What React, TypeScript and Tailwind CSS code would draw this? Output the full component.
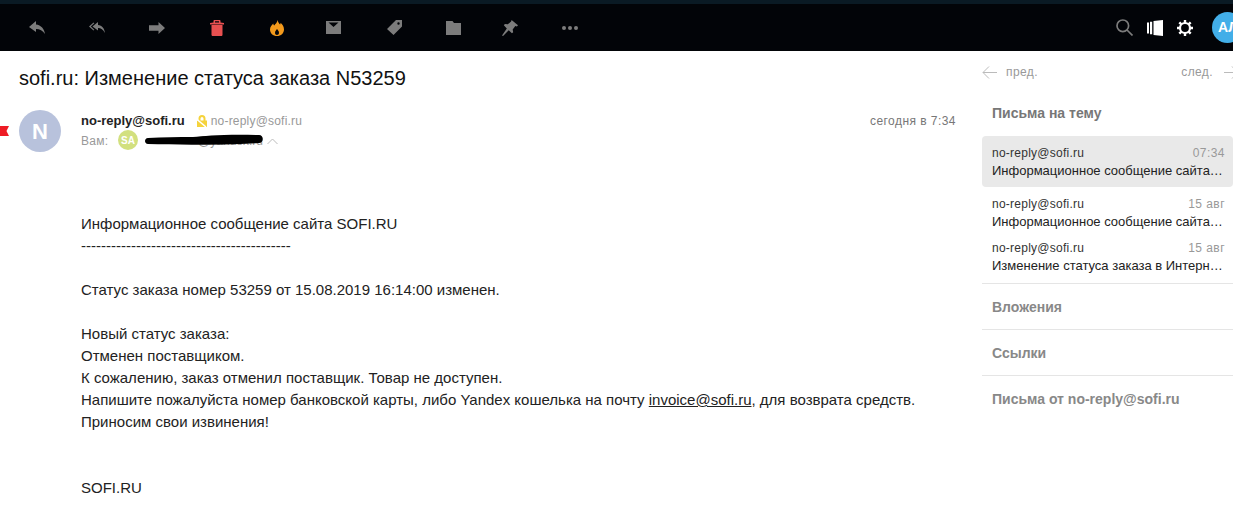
const sans = "font-['Liberation_Sans',Arial,sans-serif]";

function Reply() {
  return <svg width="16" height="13" viewBox="0 0 16 13" fill="currentColor"><path d="M7 0 0 6l7 5V8c4 0 6.500 1.500 9 5-.6-5-4-9-9-9.500z" /></svg>;
}

function ReplyAll() {
  return (
    <svg width="16" height="11" viewBox="0 0 16 11" fill="currentColor">
      <path d="M9 0 3.500 4.500 9 8.500V6c3 0 5 1.500 7 5-.5-4.500-3-7.500-7-8z" />
      <path d="M4.500 .5 0 4.500l4.500 4 .8-.8-3.500-3.200L5.300 1.300z" />
    </svg>
  );
}

function Forward() {
  return <svg width="16" height="12" viewBox="0 0 16 12" fill="currentColor"><path d="M9.500 0 16 6l-6.500 6V8.800H0V3.200h9.500z" /></svg>;
}

function Trash() {
  return (
    <svg width="14" height="16" viewBox="0 0 14 16" fill="#e85050">
      <path d="M3.500 2.500V1C3.500.4 4 0 4.500 0h5c.5 0 1 .4 1 1v1.500L14 3v1.500H0V3zM5 1.200v1.300h4V1.200z" />
      <path d="M1.500 5h11v9.700c0 .7-.6 1.300-1.300 1.300H2.800c-.7 0-1.300-.6-1.300-1.300z" />
    </svg>
  );
}

function Fire() {
  return (
    <svg width="16" height="16" viewBox="0 0 14 16">
      <path fill="#f39a1c" d="M7.500 0c.5 2.500 1.700 3.500 2.600 4.500.3-.5.500-1 .5-1.700C12.700 4.500 14 7 14 9.500 14 13.300 11 16 7 16s-7-2.700-7-6.500C0 6.500 2 5 3.200 3.500c.2 1 .5 1.500 1 2C5.500 4 7.200 2.500 7.500 0z" />
      <path fill="#05070a" d="M7 9c.8 1.200 2 2 2 3.700C9 14 8.100 15 7 15s-2-1-2-2.300C5 11 6.300 10.200 7 9z" />
    </svg>
  );
}

function Mail() {
  return <svg width="15" height="13" viewBox="0 0 15 13" fill="currentColor"><path fillRule="evenodd" d="M0 0h15v13H0zM2.500 1.500 7.500 6l5-4.500z" /></svg>;
}

function Tag() {
  return <svg width="15" height="15" viewBox="0 0 15 15" fill="currentColor"><path fillRule="evenodd" d="M9 0h6v6.500L6.500 15 0 9zM11.500 2.300a1.200 1.200 0 1 0 0 2.400 1.200 1.200 0 0 0 0-2.400z" /></svg>;
}

function Folder() {
  return <svg width="15" height="14" viewBox="0 0 15 14" fill="currentColor"><path d="M0 0h6.500L8 2h7v12H0z" /></svg>;
}

function Pin() {
  return <svg width="16" height="16" viewBox="0 0 15 15" fill="currentColor"><path d="M9 0l6 5-1 1-1.500-.3L10 9l.5 2.500-1.200 1-3-3L1 15l-1-.5L4.500 8l-2.800-3 1-1.200L5.500 4 8.500 1.300z" /></svg>;
}

function Dots() {
  return (
    <div className="flex gap-[2px]">
      <div className="size-[4px] rounded-full bg-current" />
      <div className="size-[4px] rounded-full bg-current" />
      <div className="size-[4px] rounded-full bg-current" />
    </div>
  );
}

function Search() {
  return <svg width="17" height="17" viewBox="0 0 17 17" fill="none" stroke="#7c7c7c" strokeWidth="1.700"><circle cx="6.800" cy="6.800" r="5.800" /><path d="m11 11 5.500 5.500" /></svg>;
}

function Panel() {
  return (
    <svg width="16" height="16" viewBox="0 0 16 16" fill="#fff">
      <path d="M0 2.500h2v11H0zM3 1.800h2.200v12.400H3zM6.500 1 16 0v16l-9.500-1z" />
    </svg>
  );
}

function Gear() {
  return (
    <svg width="16" height="16" viewBox="0 0 16 16" fill="none" stroke="#fff">
      <circle cx="8" cy="8" r="5" strokeWidth="2.200" />
      <path strokeWidth="2.400" d="M8 0v3M8 13v3M0 8h3M13 8h3M2.300 2.300l2.100 2.100M11.600 11.600l2.100 2.100M13.700 2.300l-2.100 2.100M4.400 11.600l-2.100 2.100" />
    </svg>
  );
}

function CrossedLock() {
  return (
    <svg width="12" height="12" viewBox="0 0 12 12" className="ml-[11px] mr-[3px]">
      <path fill="none" stroke="#f5d33c" strokeWidth="2" d="M3.500 6V3.500a2.500 2.500 0 0 1 5 0V6" />
      <path fill="#f5d33c" d="M1 5.500h10V12H1z" />
      <path stroke="#fff" strokeWidth="1.500" d="M0 3.500 10 12" />
    </svg>
  );
}

// spacing between the icons is not quite even in the original
const tools = [
  { icon: <Reply />, mr: '' },
  { icon: <ReplyAll />, mr: '' },
  { icon: <Forward />, mr: '' },
  { icon: <Trash />, mr: '' },
  { icon: <Fire />, mr: 'mr-[-4px]' },
  { icon: <Mail />, mr: 'mr-[1px]' },
  { icon: <Tag />, mr: 'mr-[-1px]' },
  { icon: <Folder />, mr: 'mr-[-3px]' },
  { icon: <Pin />, mr: '' },
  { icon: <Dots />, mr: '' },
];

const threads = [
  { time: '07:34', text: 'Информационное сообщение сайта SOFI.RU', active: true },
  { time: '15 авг', text: 'Информационное сообщение сайта SOFI.RU', active: false },
  { time: '15 авг', text: 'Изменение статуса заказа в Интернет-магазине', active: false },
];

function Toolbar() {
  return (
    <div className="h-[51px] shrink-0 border-t-4 border-[#0a1a24] bg-[#020408] flex items-center overflow-hidden pl-[7px] text-[#7c7c7c]">
      {tools.map((t, i) => (
        <div key={i} className={`w-[60px] flex justify-center ${t.mr}`}>{t.icon}</div>
      ))}
      <div className="ml-auto flex items-center">
        <Search />
        <div className="ml-[14px]"><Panel /></div>
        <div className="ml-[14px]"><Gear /></div>
        <div className={`ml-[19px] mr-[-10px] size-[31px] rounded-full bg-[#42aee8] text-white text-[14px] font-bold flex items-center pl-[6px] ${sans}`}>АЛ</div>
      </div>
    </div>
  );
}

function Message() {
  return (
    <main className="w-[982px] shrink-0">
      <h1 className={`ml-[19px] mt-[14px] text-[20px] leading-[26px] text-[#111] ${sans}`}>sofi.ru: Изменение статуса заказа N53259</h1>
      <div className={`mt-[19px] flex items-start ${sans}`}>
        <svg width="9" height="10" viewBox="0 0 9 10" className="mr-[10px] mt-[16px]"><path fill="#ee1c25" d="M0 0h9L6.500 5 9 10H0z" /></svg>
        <div className="size-[42px] rounded-full bg-[#b8c2dc] text-white text-[22px] font-bold flex items-center justify-center">N</div>
        <div className="ml-[20px] flex-1">
          <div className="flex items-center h-[20px] pt-[2px] pr-[26px]">
            <span className="text-[13px] font-bold text-[#222]">no-reply@sofi.ru</span>
            <CrossedLock />
            <span className="text-[12px] text-[#999] tracking-[0.2px]">no-reply@sofi.ru</span>
            <span className="ml-auto text-[12px] text-[#777] tracking-[0.45px]">сегодня в 7:34</span>
          </div>
          <div className="flex items-center h-[20px]">
            <span className="w-[37px] pt-[2px] text-[12px] text-[#999] tracking-[0.3px]">Вам:</span>
            <div className="size-[20px] rounded-full bg-[#d2e07f] text-white text-[10px] font-bold flex items-center justify-center">SA</div>
            <div className="relative ml-[7px] w-[118px] h-[20px] text-right text-[12px] leading-[22px] text-[#999]">
              @yandex.ru
              <svg width="118" height="12" viewBox="0 0 118 12" className="absolute left-0 top-[4px]"><path fill="#000" d="M3 4c15-1 30-1 45-1 12-1 30-3 66-2 5 0 5 8 0 8-36 2-80 2-111 1-4 0-4-6 0-6z" /></svg>
            </div>
            <svg width="11" height="7" viewBox="0 0 11 7" className="ml-[4px] mt-[3px]"><path fill="none" stroke="#bbb" d="m.5 6 5-5 5 5" /></svg>
          </div>
        </div>
      </div>
      <div className={`ml-[81px] mt-[61px] text-[15px] leading-[22px] text-[#222] ${sans}`}>
        <p>Информационное сообщение сайта SOFI.RU</p>
        <p>------------------------------------------</p>
        <p className="mt-[22px]">Статус заказа номер 53259 от 15.08.2019 16:14:00 изменен.</p>
        <p className="mt-[22px]">Новый статус заказа:</p>
        <p>Отменен поставщиком.</p>
        <p>К сожалению, заказ отменил поставщик. Товар не доступен.</p>
        <p>Напишите пожалуйста номер банковской карты, либо Yandex кошелька на почту <u>invoice@sofi.ru</u>, для возврата средств.</p>
        <p>Приносим свои извинения!</p>
        <p className="mt-[44px]">SOFI.RU</p>
      </div>
    </main>
  );
}

function Sidebar() {
  return (
    <aside className={`flex-1 min-w-0 ${sans}`}>
      <div className="flex items-center h-[20px] mt-[11px] text-[12px] text-[#999] tracking-[0.4px]">
        <svg width="15" height="13" viewBox="0 0 15 13" fill="none" stroke="#bbb" className="shrink-0"><path d="M15 6.500H1M7 .5l-6 6 6 6" /></svg>
        <span className="ml-[9px]">пред.</span>
        <span className="ml-auto">след.</span>
        <svg width="15" height="13" viewBox="0 0 15 13" fill="none" stroke="#bbb" className="ml-[11px] mr-[-6px] shrink-0"><path d="M0 6.500h14M8 .5l6 6-6 6" /></svg>
      </div>
      <h2 className="ml-[10px] mt-[21px] text-[14px] leading-[20px] font-bold text-[#777]">Письма на тему</h2>
      <div className="mt-[13px] mb-[5px] flex flex-col">
        {threads.map((t, i) => (
          <div key={i} className={`pl-[10px] pr-[8px] rounded-[4px] ${t.active ? 'bg-[#e9e9e9] h-[51px] pt-[8px] mb-[3px]' : 'h-[44px] pt-[5px]'}`}>
            <div className="flex justify-between text-[12px] leading-[18px] text-[#333]">
              <span className="tracking-[0.25px]">no-reply@sofi.ru</span>
              <span className="text-[#999] tracking-[0.45px]">{t.time}</span>
            </div>
            <div className="truncate text-[13px] leading-[18px] text-[#222]">{t.text}</div>
          </div>
        ))}
      </div>
      {['Вложения', 'Ссылки', 'Письма от no-reply@sofi.ru'].map((s) => (
        <div key={s} className="border-t border-[#e5e5e5] h-[46px] pl-[10px] pt-[1px] flex items-center text-[14px] font-bold text-[#888]">{s}</div>
      ))}
    </aside>
  );
}

export default function App() {
  return (
    <div className="h-[525px] w-[1233px] overflow-hidden bg-white flex flex-col">
      <Toolbar />
      <div className="flex">
        <Message />
        <Sidebar />
      </div>
    </div>
  );
}
